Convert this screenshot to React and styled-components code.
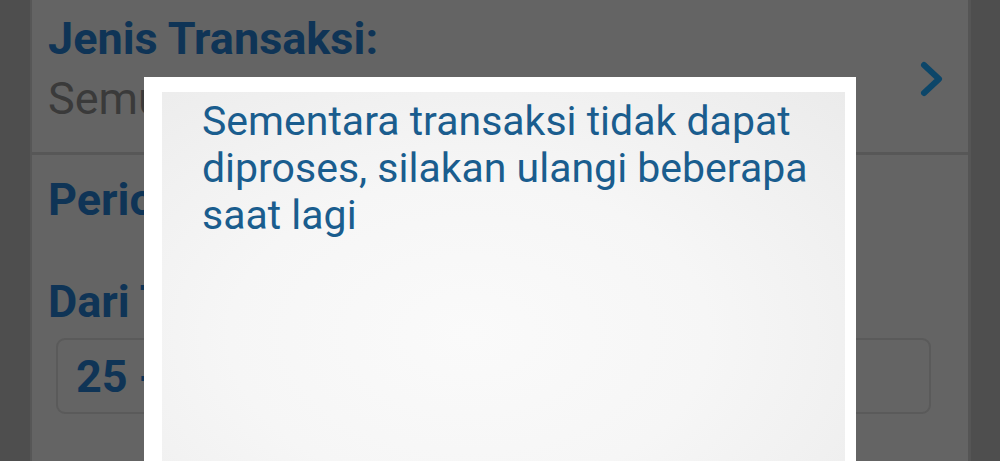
import React from "react";
import styled, { createGlobalStyle } from "styled-components";

const Global = createGlobalStyle`
  html, body { margin: 0; padding: 0; background: #4e4e4e; overflow: hidden; }
  body { font-family: Roboto, "Noto Sans", Arial, sans-serif; }
`;

const Screen = styled.div`
  position: relative;
  width: 1000px;
  height: 461px;
  display: flex;
  overflow: hidden;
  background: #4e4e4e;
`;

const Panel = styled.div`
  margin-left: 30px;
  width: 936px;
  background: #646464;
  border-left: 2px solid #575757;
  border-right: 3px solid #555555;
  display: flex;
  flex-direction: column;
`;

const Section = styled.div`
  padding: ${(p) => p.$pad || "0 0 0 16px"};
  border-bottom: ${(p) => (p.$divider ? "3px solid #575757" : "none")};
  display: flex;
  align-items: center;
  justify-content: space-between;
  height: ${(p) => p.$h || "auto"};
  box-sizing: border-box;
`;

const Col = styled.div`
  display: flex;
  flex-direction: column;
  align-self: ${(p) => p.$self || "auto"};
`;

const Label = styled.div`
  font-weight: 700;
  font-size: 45px;
  line-height: 60px;
  color: #0f3456;
`;

const Value = styled.div`
  font-size: 45px;
  line-height: 60px;
  color: #3a3a3a;
`;

const Chevron = styled.svg`
  width: 28px;
  height: 40px;
  margin-right: 22px;
  margin-top: -4px;
`;

const InputBox = styled.div`
  margin: 6px 0 0 24px;
  width: 875px;
  height: 76px;
  box-sizing: border-box;
  border: 2px solid #5a5a5a;
  border-radius: 9px;
  display: flex;
  align-items: center;
  padding-left: 18px;
  font-weight: 700;
  font-size: 45px;
  color: #0f3456;
`;

const Modal = styled.div`
  position: absolute;
  left: 144px;
  top: 77px;
  width: 712px;
  height: 420px;
  background: #ffffff;
  padding: 15px 11px 0 18px;
  box-sizing: border-box;
  display: flex;
`;

const ModalBody = styled.div`
  flex: 1;
  background: radial-gradient(ellipse at 45% 60%, #fafafa 0%, #f6f6f6 45%, #ebebeb 100%);
  padding: 6px 30px 0 40px;
  box-sizing: border-box;
`;

const Message = styled.p`
  margin: 0;
  font-size: 41px;
  line-height: 47px;
  color: #1a5d8e;
`;

export default function App() {
  return (
    <>
      <Global />
      <Screen>
        <Panel>
          <Section $divider $h="155px" $pad="9px 0 0 16px">
            <Col $self="flex-start">
              <Label>Jenis Transaksi:</Label>
              <Value>Semua</Value>
            </Col>
            <Chevron viewBox="0 0 28 40">
              <polyline
                points="6,6 21,20 6,34"
                fill="none"
                stroke="#0c4669"
                strokeWidth="6"
                strokeLinecap="round"
                strokeLinejoin="round"
              />
            </Chevron>
          </Section>
          <Col>
            <Section $pad="15px 0 0 16px">
              <Label>Periode:</Label>
            </Section>
            <Section $pad="42px 0 0 16px">
              <Label>Dari Tanggal:</Label>
            </Section>
            <InputBox>25 - 06 - 2020</InputBox>
          </Col>
        </Panel>
        <Modal>
          <ModalBody>
            <Message>
              Sementara transaksi tidak dapat diproses, silakan ulangi beberapa saat lagi
            </Message>
          </ModalBody>
        </Modal>
      </Screen>
    </>
  );
}
